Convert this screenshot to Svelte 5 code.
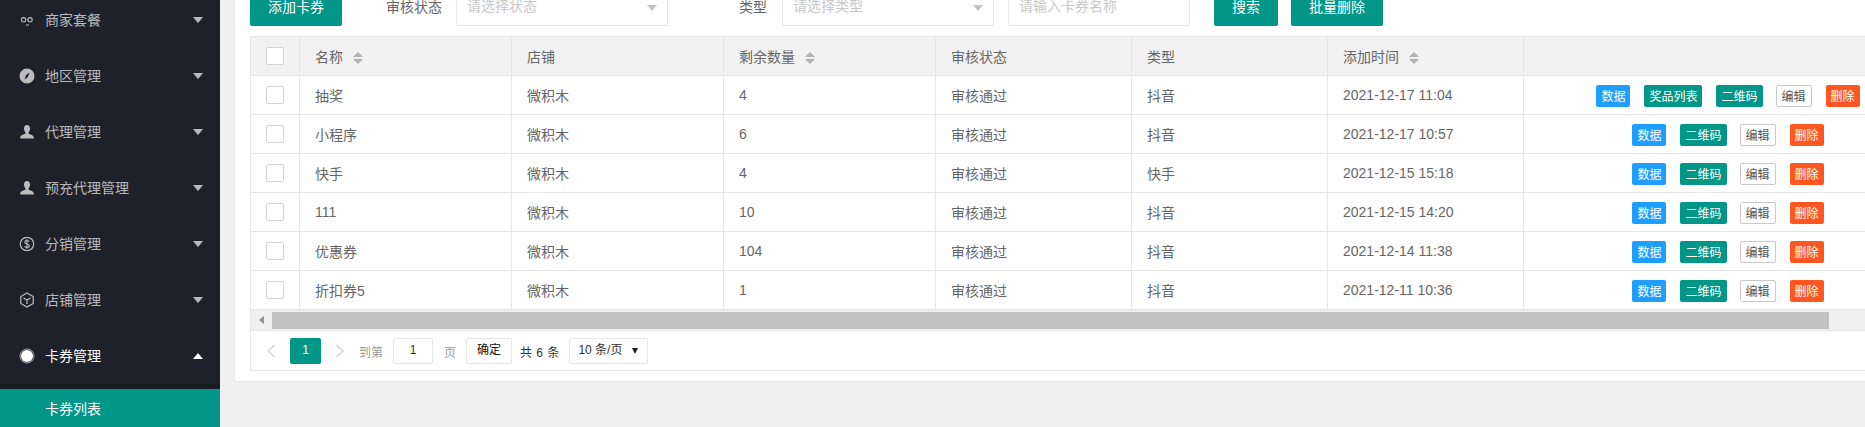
<script>
  const menu = [
    { name: '商家套餐', icon: 'combo' },
    { name: '地区管理', icon: 'compass' },
    { name: '代理管理', icon: 'user' },
    { name: '预充代理管理', icon: 'user' },
    { name: '分销管理', icon: 'dollar' },
    { name: '店铺管理', icon: 'cube' },
    { name: '卡券管理', icon: 'ring', open: true }
  ];

  const rows = [
    { name: '抽奖', left: '4', type: '抖音', time: '2021-12-17 11:04', prizes: true },
    { name: '小程序', left: '6', type: '抖音', time: '2021-12-17 10:57' },
    { name: '快手', left: '4', type: '快手', time: '2021-12-15 15:18' },
    { name: '111', left: '10', type: '抖音', time: '2021-12-15 14:20' },
    { name: '优惠券', left: '104', type: '抖音', time: '2021-12-14 11:38' },
    { name: '折扣券5', left: '1', type: '抖音', time: '2021-12-11 10:36' }
  ];

  const widths = [49, 212, 212, 212, 196, 196, 196, 409];
</script>

<div class="page">
  <aside class="side">
    {#each menu as item}
      <div class="nav-item" class:open={item.open}>
        <svg class="nav-icon" viewBox="0 0 16 16" width="16" height="16">
          {#if item.icon === 'combo'}
            <circle cx="4.6" cy="7.8" r="2.2" fill="none" stroke="currentColor" stroke-width="1.1" />
            <circle cx="11" cy="7.8" r="2.2" fill="none" stroke="currentColor" stroke-width="1.1" />
            <path d="M7 13 L10 13" fill="none" stroke="currentColor" stroke-width="1" />
          {:else if item.icon === 'compass'}
            <circle cx="8" cy="8" r="7.5" fill="currentColor" />
            <path d="M10.6 4.6 L8.9 8.9 L5.4 11.4 L7.1 7.1 Z" fill="#1e2129" />
          {:else if item.icon === 'user'}
            <path d="M8 1 C10 1 11 2.6 11 4.6 C11 6.4 10.3 7.6 9.6 8.4 L9.6 9.8 C11.6 10.6 14.6 11.2 14.8 13.4 L14.8 14.6 L1.2 14.6 L1.2 13.4 C1.4 11.2 4.4 10.6 6.4 9.8 L6.4 8.4 C5.7 7.6 5 6.4 5 4.6 C5 2.6 6 1 8 1 Z" fill="currentColor" />
          {:else if item.icon === 'dollar'}
            <circle cx="8" cy="8" r="6.7" fill="none" stroke="currentColor" stroke-width="1.2" />
            <path d="M10.3 5.8 C9.8 4.8 8.8 4.5 8 4.5 C6.8 4.5 5.8 5.1 5.8 6.2 C5.8 8.6 10.4 7.4 10.4 9.8 C10.4 10.9 9.3 11.5 8 11.5 C7 11.5 6 11.1 5.6 10.2 M8 3.2 L8 12.8" fill="none" stroke="currentColor" stroke-width="1.1" />
          {:else if item.icon === 'cube'}
            <path d="M8 1 L14.2 4.5 L14.2 11.5 L8 15 L1.8 11.5 L1.8 4.5 Z M4.5 6 L8 8 L11.5 6 M8 8 L8 12" fill="none" stroke="currentColor" stroke-width="1.2" />
          {:else}
            <circle cx="8" cy="8" r="6" fill="currentColor" />
            <circle cx="8" cy="8" r="7" fill="none" stroke="currentColor" stroke-width="0.6" />
          {/if}
        </svg>
        <span class="nav-text">{item.name}</span>
        <span class="nav-more"></span>
      </div>
    {/each}
    <div class="nav-child">
      <div class="nav-sub">卡券列表</div>
    </div>
  </aside>

  <main class="main">
    <section class="card">
      <div class="toolbar">
        <button class="btn">添加卡券</button>
        <span class="label first">审核状态</span>
        <div class="select">请选择状态<i class="caret"></i></div>
        <span class="label second">类型</span>
        <div class="select">请选择类型<i class="caret"></i></div>
        <div class="input">请输入卡券名称</div>
        <button class="btn search">搜索</button>
        <button class="btn batch">批量删除</button>
      </div>

      <div class="table-box">
        <table>
          <colgroup>
            {#each widths as w}
              <col style="width: {w}px" />
            {/each}
          </colgroup>
          <thead>
            <tr>
              <th><span class="check"></span></th>
              <th>名称<span class="sort"></span></th>
              <th>店铺</th>
              <th>剩余数量<span class="sort"></span></th>
              <th>审核状态</th>
              <th>类型</th>
              <th>添加时间<span class="sort"></span></th>
              <th></th>
            </tr>
          </thead>
          <tbody>
            {#each rows as row}
              <tr>
                <td><span class="check"></span></td>
                <td>{row.name}</td>
                <td>微积木</td>
                <td>{row.left}</td>
                <td>审核通过</td>
                <td>{row.type}</td>
                <td>{row.time}</td>
                <td>
                  <div class="actions">
                    <button class="xs blue">数据</button>
                    {#if row.prizes}
                      <button class="xs teal">奖品列表</button>
                    {/if}
                    <button class="xs teal">二维码</button>
                    <button class="xs plain">编辑</button>
                    <button class="xs red">删除</button>
                  </div>
                </td>
              </tr>
            {/each}
          </tbody>
        </table>

        <div class="scrollbar">
          <div class="scroll-arrow"><i></i></div>
          <div class="scroll-thumb"></div>
        </div>

        <div class="pager">
          <svg class="chev" viewBox="0 0 10 14" width="10" height="14"><path d="M8.5 1 L2 7 L8.5 13" fill="none" stroke="#d2d2d2" stroke-width="1.3" /></svg>
          <span class="page-on">1</span>
          <svg class="chev next" viewBox="0 0 10 14" width="10" height="14"><path d="M1.5 1 L8 7 L1.5 13" fill="none" stroke="#d2d2d2" stroke-width="1.3" /></svg>
          <span class="to">到第</span>
          <span class="page-input">1</span>
          <span class="to unit">页</span>
          <span class="go">确定</span>
          <span class="total">共 6 条</span>
          <span class="limit">10 条/页<i></i></span>
        </div>
      </div>
    </section>
  </main>
</div>

<style>
  :global(body) {
    margin: 0;
    background: #f0f0f0;
  }
  * {
    box-sizing: border-box;
  }
  .page {
    display: flex;
    width: 1865px;
    height: 427px;
    overflow: hidden;
    font-family: "Liberation Sans", "Noto Sans CJK SC", sans-serif;
    font-size: 14px;
    color: #666;
  }

  .side {
    flex: 0 0 220px;
    margin-top: -8px;
    height: 435px;
    overflow: hidden;
    background: #1e2129;
  }
  .nav-item {
    display: flex;
    align-items: center;
    height: 56px;
    padding-left: 19px;
    color: rgba(255, 255, 255, 0.7);
    position: relative;
  }
  .nav-item.open {
    color: #fff;
  }
  .nav-icon {
    flex: none;
  }
  .nav-text {
    margin-left: 10px;
    margin-bottom: 2px;
  }
  .nav-more {
    position: absolute;
    left: 193px;
    top: 25px;
    border-style: solid;
    border-width: 6px 5.5px 0;
    border-color: rgba(255, 255, 255, 0.7) transparent transparent;
  }
  .open .nav-more {
    border-width: 0 5.5px 6px;
    border-color: transparent transparent #fff;
  }
  .nav-child {
    padding-top: 5px;
    background: #191c23;
  }
  .nav-sub {
    height: 40px;
    line-height: 40px;
    padding-left: 45px;
    background: #009688;
    color: #fff;
  }

  .main {
    flex: 1;
    min-width: 0;
    padding-left: 15px;
  }
  .card {
    margin-top: -12px;
    padding: 0 0 10px 15px;
    background: #fff;
    border-radius: 2px 0 0 2px;
    box-shadow: 0 1px 2px rgba(0, 0, 0, 0.05);
    overflow: hidden;
  }

  .toolbar {
    display: flex;
    align-items: center;
    height: 38px;
    margin-bottom: 10px;
  }
  .btn {
    height: 38px;
    padding: 0 18px 2px;
    border: none;
    border-radius: 2px;
    background: #009688;
    color: #fff;
    font: inherit;
    white-space: nowrap;
  }
  .btn.search {
    width: 64px;
    padding: 0 0 2px;
    margin-left: 24px;
  }
  .btn.batch {
    margin-left: 13px;
  }
  .label {
    flex: none;
    margin-bottom: 2px;
  }
  .label.first {
    margin-left: 44px;
    margin-right: 14px;
  }
  .label.second {
    margin-left: 71px;
    margin-right: 15px;
  }
  .select,
  .input {
    position: relative;
    height: 38px;
    line-height: 34px;
    padding-left: 10px;
    border: 1px solid #e6e6e6;
    border-radius: 2px;
    color: #c8c8c8;
    background: #fff;
  }
  .select {
    width: 212px;
  }
  .input {
    width: 182px;
    margin-left: 14px;
  }
  .caret {
    position: absolute;
    right: 10px;
    top: 16px;
    border-style: solid;
    border-width: 6px 5.5px 0;
    border-color: #c2c2c2 transparent transparent;
  }

  .table-box {
    border: 1px solid #e6e6e6;
    border-right: none;
    overflow: hidden;
  }
  table {
    width: 1682px;
    table-layout: fixed;
    border-collapse: separate;
    border-spacing: 0;
  }
  th,
  td {
    height: 39px;
    padding: 0 15px 1px;
    border-right: 1px solid #e6e6e6;
    border-bottom: 1px solid #e6e6e6;
    text-align: left;
    font-weight: 400;
    white-space: nowrap;
  }
  th {
    background: #f2f2f2;
  }
  th:last-child,
  td:last-child {
    border-right: none;
    padding-right: 16px;
  }
  .check {
    display: block;
    width: 18px;
    height: 18px;
    margin-top: 1px;
    border: 1px solid #d2d2d2;
    border-radius: 2px;
    background: #fff;
  }
  .sort {
    display: inline-block;
    position: relative;
    width: 10px;
    height: 12px;
    margin-left: 10px;
    vertical-align: -2px;
  }
  .sort::before,
  .sort::after {
    content: "";
    position: absolute;
    left: 0;
    border-style: solid;
    border-color: transparent;
  }
  .sort::before {
    top: 0;
    border-width: 0 5px 5px;
    border-bottom-color: #b2b2b2;
  }
  .sort::after {
    bottom: 0;
    border-width: 5px 5px 0;
    border-top-color: #b2b2b2;
  }
  .actions {
    display: flex;
    justify-content: center;
    gap: 14px;
    margin-top: 3px;
  }
  .xs {
    height: 22px;
    padding: 0 5px 1px;
    border: none;
    border-radius: 2px;
    font: inherit;
    font-size: 12px;
    color: #fff;
    white-space: nowrap;
  }
  .blue {
    background: #1e9fff;
  }
  .teal {
    background: #009688;
  }
  .red {
    background: #ff5722;
  }
  .plain {
    margin-left: -1px;
    border: 1px solid #c9c9c9;
    background: #fff;
    color: #555;
  }

  .scrollbar {
    display: flex;
    height: 21px;
    padding: 2px 0 1px;
    background: #f0f0f0;
    border-bottom: 1px solid #e6e6e6;
  }
  .scroll-arrow {
    position: relative;
    width: 21px;
  }
  .scroll-arrow i {
    position: absolute;
    left: 8px;
    top: 4px;
    border-style: solid;
    border-width: 4.5px 5px 4.5px 0;
    border-color: transparent #8f8f8f transparent transparent;
  }
  .scroll-thumb {
    width: 1557px;
    background: #c1c1c1;
  }

  .pager {
    display: flex;
    align-items: center;
    height: 39px;
    padding: 1px 0 0 15px;
    font-size: 12px;
    color: #333;
  }
  .chev {
    flex: none;
  }
  .page-on {
    width: 31px;
    height: 26px;
    line-height: 25px;
    margin-left: 14px;
    border-radius: 2px;
    background: #009688;
    color: #fff;
    text-align: center;
  }
  .chev.next {
    margin-left: 14px;
  }
  .to {
    margin-left: 14px;
    color: #999;
  }
  .to.unit {
    margin-left: 11px;
  }
  .page-input,
  .go,
  .limit {
    height: 26px;
    line-height: 23px;
    border: 1px solid #e6e6e6;
    border-radius: 2px;
    background: #fff;
  }
  .page-input {
    width: 40px;
    margin-left: 10px;
    text-align: center;
  }
  .go {
    width: 46px;
    margin-left: 10px;
    text-align: center;
    color: #111;
  }
  .total {
    margin-left: 8px;
    word-spacing: 1px;
  }
  .limit {
    position: relative;
    width: 79px;
    margin-left: 10px;
    padding-left: 8px;
  }
  .limit i {
    position: absolute;
    right: 9px;
    top: 9px;
    border-style: solid;
    border-width: 6px 3.5px 0;
    border-color: #222 transparent transparent;
  }
</style>
